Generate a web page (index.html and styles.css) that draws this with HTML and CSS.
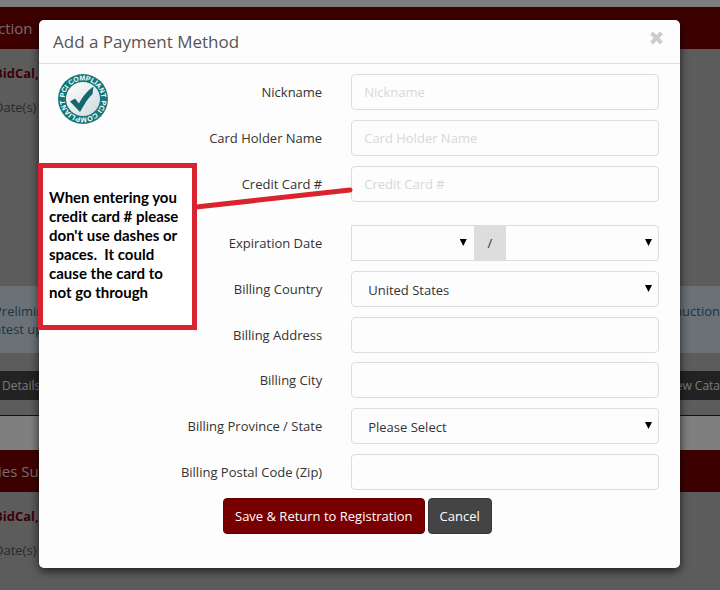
FILE: index.html
```html
<!DOCTYPE html>
<html lang="en">
<head>
<meta charset="utf-8">
<title>Add a Payment Method</title>
<link rel="stylesheet" href="styles.css">
</head>
<body>
<div class="page">
  <div class="bar bar-first">ction</div>
  <div class="event">
    <p class="company">BidCal,</p>
    <p class="dates">Date(s)</p>
  </div>
  <div class="notice">
    <p class="notice-text">Prelimin<br>atest upd</p>
    <p class="notice-text">auction</p>
  </div>
  <div class="tools">
    <span>Details</span>
    <span>iew Cata</span>
  </div>
  <div class="search"></div>
  <div class="bar">ies Sup</div>
  <div class="event">
    <p class="company">BidCal,</p>
    <p class="dates">Date(s)</p>
  </div>
</div>

<div class="backdrop">
  <section class="modal" role="dialog" aria-labelledby="title">
    <header class="modal-header">
      <h1 id="title">Add a Payment Method</h1>
      <button class="close" type="button" aria-label="Close">
        <svg width="15" height="14" viewBox="0 0 15 14"><path d="M2.500 2 12.500 12M12.500 2 2.500 12" stroke="#ccc" stroke-width="4" fill="none"/></svg>
      </button>
    </header>
    <form class="modal-body">
      <svg class="badge" width="52" height="52" viewBox="0 0 52 52" role="img" aria-label="PCI compliant">
        <defs>
          <linearGradient id="disc" x1="0" y1="0" x2="1" y2="1">
            <stop offset="0" stop-color="#fff"/>
            <stop offset="1" stop-color="#cfd8dc"/>
          </linearGradient>
          <path id="upper" d="M7.500 26A18.500 18.500 0 0 1 44.500 26"/>
          <path id="lower" d="M44.500 26A18.500 18.500 0 0 1 7.500 26"/>
        </defs>
        <circle cx="26" cy="26" r="25" fill="#14787b"/>
        <circle cx="26" cy="26" r="17" fill="url(#disc)"/>
        <text class="badge-text"><textPath href="#upper" startOffset="50%">PCI COMPLIANT</textPath></text>
        <text class="badge-text"><textPath href="#lower" startOffset="50%">PCI COMPLIANT</textPath></text>
        <path d="M13 28.500 18 25.500 22 30.500C26 23 30 18 36.500 13.500L35.500 21C31 25 27.500 31 23 39Z" fill="#14676b"/>
      </svg>

      <div class="group">
        <div class="row"><label for="nick">Nickname</label><input id="nick" type="text" placeholder="Nickname"></div>
        <div class="row"><label for="holder">Card Holder Name</label><input id="holder" type="text" placeholder="Card Holder Name"></div>
        <div class="row"><label for="card">Credit Card #</label><input id="card" type="text" placeholder="Credit Card #"></div>
      </div>
      <div class="group group-spaced">
        <div class="row">
          <label for="month">Expiration Date</label>
          <div class="expiry">
            <div class="pick pick-month"><select id="month"><option></option></select></div>
            <span class="slash">/</span>
            <div class="pick pick-year"><select aria-label="Expiration year"><option></option></select></div>
          </div>
        </div>
        <div class="row"><label for="country">Billing Country</label><div class="pick"><select id="country"><option>United States</option></select></div></div>
        <div class="row"><label for="address">Billing Address</label><input id="address" type="text"></div>
      </div>
      <div class="group group-next">
        <div class="row"><label for="city">Billing City</label><input id="city" type="text"></div>
        <div class="row"><label for="state">Billing Province / State</label><div class="pick"><select id="state"><option>Please Select</option></select></div></div>
        <div class="row"><label for="zip">Billing Postal Code (Zip)</label><input id="zip" type="text"></div>
      </div>
      <div class="actions">
        <button class="btn btn-save" type="submit">Save &amp; Return to Registration</button>
        <button class="btn btn-cancel" type="button">Cancel</button>
      </div>
    </form>
    <svg class="pointer" width="160" height="24" viewBox="0 0 160 24" aria-hidden="true"><path d="M0 20 154 3" stroke="#d9232e" stroke-width="5" stroke-linecap="round"/></svg>
    <aside class="note">When entering you<br>credit card # please<br>don't use dashes or<br>spaces.&nbsp; It could<br>cause the card to<br>not go through</aside>
  </section>
</div>
</body>
</html>
```
FILE: styles.css
```css
* { box-sizing: border-box; }

body {
  margin: 0;
  font: 13px/18px "Open Sans", "Noto Sans", sans-serif;
  color: #333;
  background: #b8b8b8;
  overflow: hidden;
}

p, h1 { margin: 0; }

/* Page behind the dialog */
.page {
  min-height: 100vh;
  margin-left: -6px;
  border-top: 7px solid #f8faff;
}

.bar {
  height: 42px;
  padding-left: 4px;
  background: #7a0000;
  color: #ddd;
  font-size: 15px;
  line-height: 42px;
}

.event { padding: 15px 0 0; }

.bar-first + .event { height: 237px; }

.company {
  color: #7a0014;
  font-weight: 700;
}

.dates {
  margin-top: 16px;
  color: #555;
}

.notice {
  display: flex;
  justify-content: space-between;
  height: 67px;
  padding-top: 16px;
  background: #d5e5ee;
  color: #3b6a88;
}

.tools {
  display: flex;
  justify-content: space-between;
  height: 29px;
  margin: 18px 0 15px;
  padding-left: 8px;
  background: #444;
  color: #eee;
  font-size: 12px;
  line-height: 29px;
}

.search {
  height: 35px;
  border-top: 1px solid #7a0000;
  background: #fff;
}

/* Dialog */
.backdrop {
  position: absolute;
  inset: 0;
  padding: 20px 40px 20px 39px;
  background: rgba(0, 0, 0, .5);
}

.modal {
  position: relative;
  border-radius: 5px;
  background: #fdfdfd;
  box-shadow: 0 3px 10px rgba(0, 0, 0, .7);
}

.modal-header {
  display: flex;
  justify-content: space-between;
  align-items: center;
  height: 44px;
  padding: 0 16px 0 14px;
  border-bottom: 1px solid #ddd;
}

.modal-header h1 {
  color: #555;
  font-size: 17px;
  font-weight: 400;
}

.close {
  padding: 0 0 8px;
  border: 0;
  background: none;
  line-height: 0;
}

.modal-body {
  position: relative;
  padding: 10px 21px 34px 0;
}

.badge {
  position: absolute;
  left: 18px;
  top: 9px;
}

.badge-text {
  fill: #fff;
  font: 700 7px "Liberation Sans", sans-serif;
  text-anchor: middle;
}

.group {
  display: grid;
  gap: 10px;
}

.group-spaced { margin-top: 23px; }
.group-next { margin-top: 9px; }

.row {
  display: grid;
  grid-template-columns: 23fr 25fr;
  gap: 29px;
  align-items: center;
}

.row label { text-align: right; }

input, select {
  display: block;
  width: 100%;
  height: 36px;
  margin: 0;
  padding: 0 12px;
  border: 1px solid #ddd;
  border-radius: 4px;
  background: #fdfdfd;
  color: #333;
  font: inherit;
}

input::placeholder {
  color: #d8d8d8;
  opacity: 1;
}

select {
  appearance: none;
  padding: 2px 16px 0;
}

.pick { position: relative; }

.pick::after {
  content: "";
  position: absolute;
  right: 7px;
  top: 14px;
  width: 7px;
  height: 7px;
  background: #000;
  clip-path: polygon(0 0, 100% 0, 50% 100%);
  pointer-events: none;
}

.expiry { display: flex; }
.pick-month { flex: 4; }
.pick-year { flex: 5; }
.pick-month select { border-radius: 0; border-right: 0; }
.pick-year select { border-radius: 0 4px 4px 0; border-left: 0; }

.slash {
  width: 32px;
  background: #ddd;
  line-height: 36px;
  text-align: center;
}

.actions {
  display: flex;
  gap: 3px;
  margin-top: 8px;
  padding-left: 184px;
}

.btn {
  height: 36px;
  padding: 0 11px;
  border: 1px solid #600;
  border-radius: 4px;
  color: #fff;
  font: inherit;
}

.btn-save { background: #780000; }

.btn-cancel {
  border-color: #383838;
  background: #444;
}

/* Callout over the dialog */
.pointer {
  position: absolute;
  left: 157px;
  top: 167px;
}

.note {
  position: absolute;
  left: -1px;
  top: 143px;
  width: 159px;
  height: 167px;
  padding: 20px 6px;
  border: 5px solid #d9232e;
  background: #fff;
  color: #000;
  font: 700 15px/19px Lato, sans-serif;
  white-space: nowrap;
}
```
